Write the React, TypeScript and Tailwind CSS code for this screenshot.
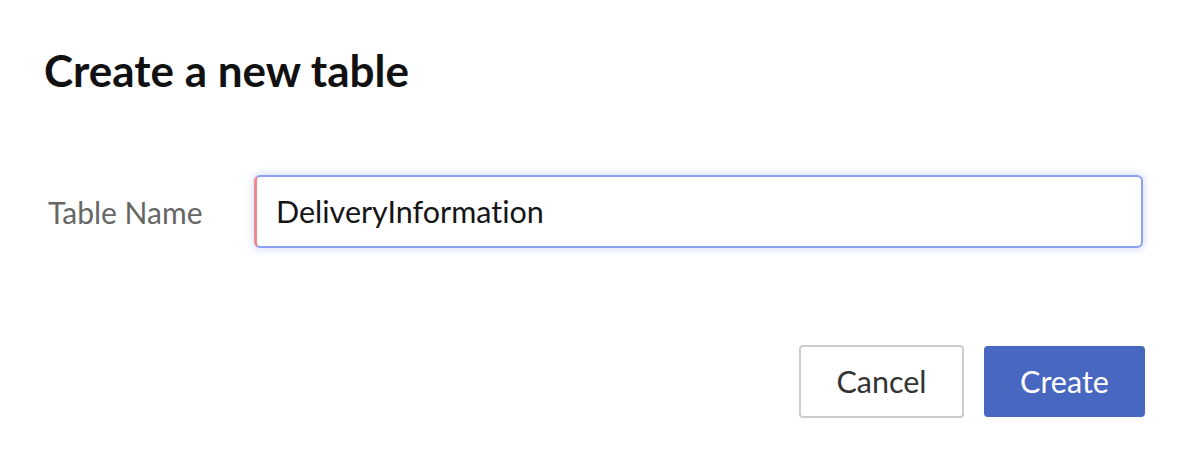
import React from 'react';

const App: React.FC = () => {
  return (
    <div
      className="w-[1192px] h-[462px] bg-white flex flex-col [font-variant-ligatures:none]"
      style={{ fontFamily: 'Lato, "Noto Sans", sans-serif' }}
    >
      {/* Heading */}
      <h1 className="pl-[44px] pt-[44px] text-[44px] leading-[52px] font-bold text-[#111111]">
        Create a new table
      </h1>

      {/* Name field */}
      <div className="flex items-center pl-[48px] pr-[49px] mt-[79px]">
        <label className="w-[206px] shrink-0 text-[30px] leading-none text-[#666666]">
          Table Name
        </label>
        <div className="flex-1 h-[73px] flex items-center rounded-[6px] border-2 border-[#8aa1f4] border-l-[3px] border-l-[#ec8b8b] bg-white shadow-[0_0_6px_2px_rgba(120,140,240,0.25)] pl-[19px]">
          <span className="text-[30.5px] leading-none text-[#151515]">DeliveryInformation</span>
        </div>
      </div>

      {/* Actions */}
      <div className="flex justify-end gap-[20px] pr-[47px] mt-[97px]">
        <button className="w-[165px] h-[73px] rounded-[4px] border-2 border-[#cccccc] bg-white text-[30.5px] text-[#333333]">
          Cancel
        </button>
        <button className="w-[161px] h-[71px] mt-px rounded-[4px] bg-[#4767c1] text-[30.5px] text-white">
          Create
        </button>
      </div>
    </div>
  );
};

export default App;
